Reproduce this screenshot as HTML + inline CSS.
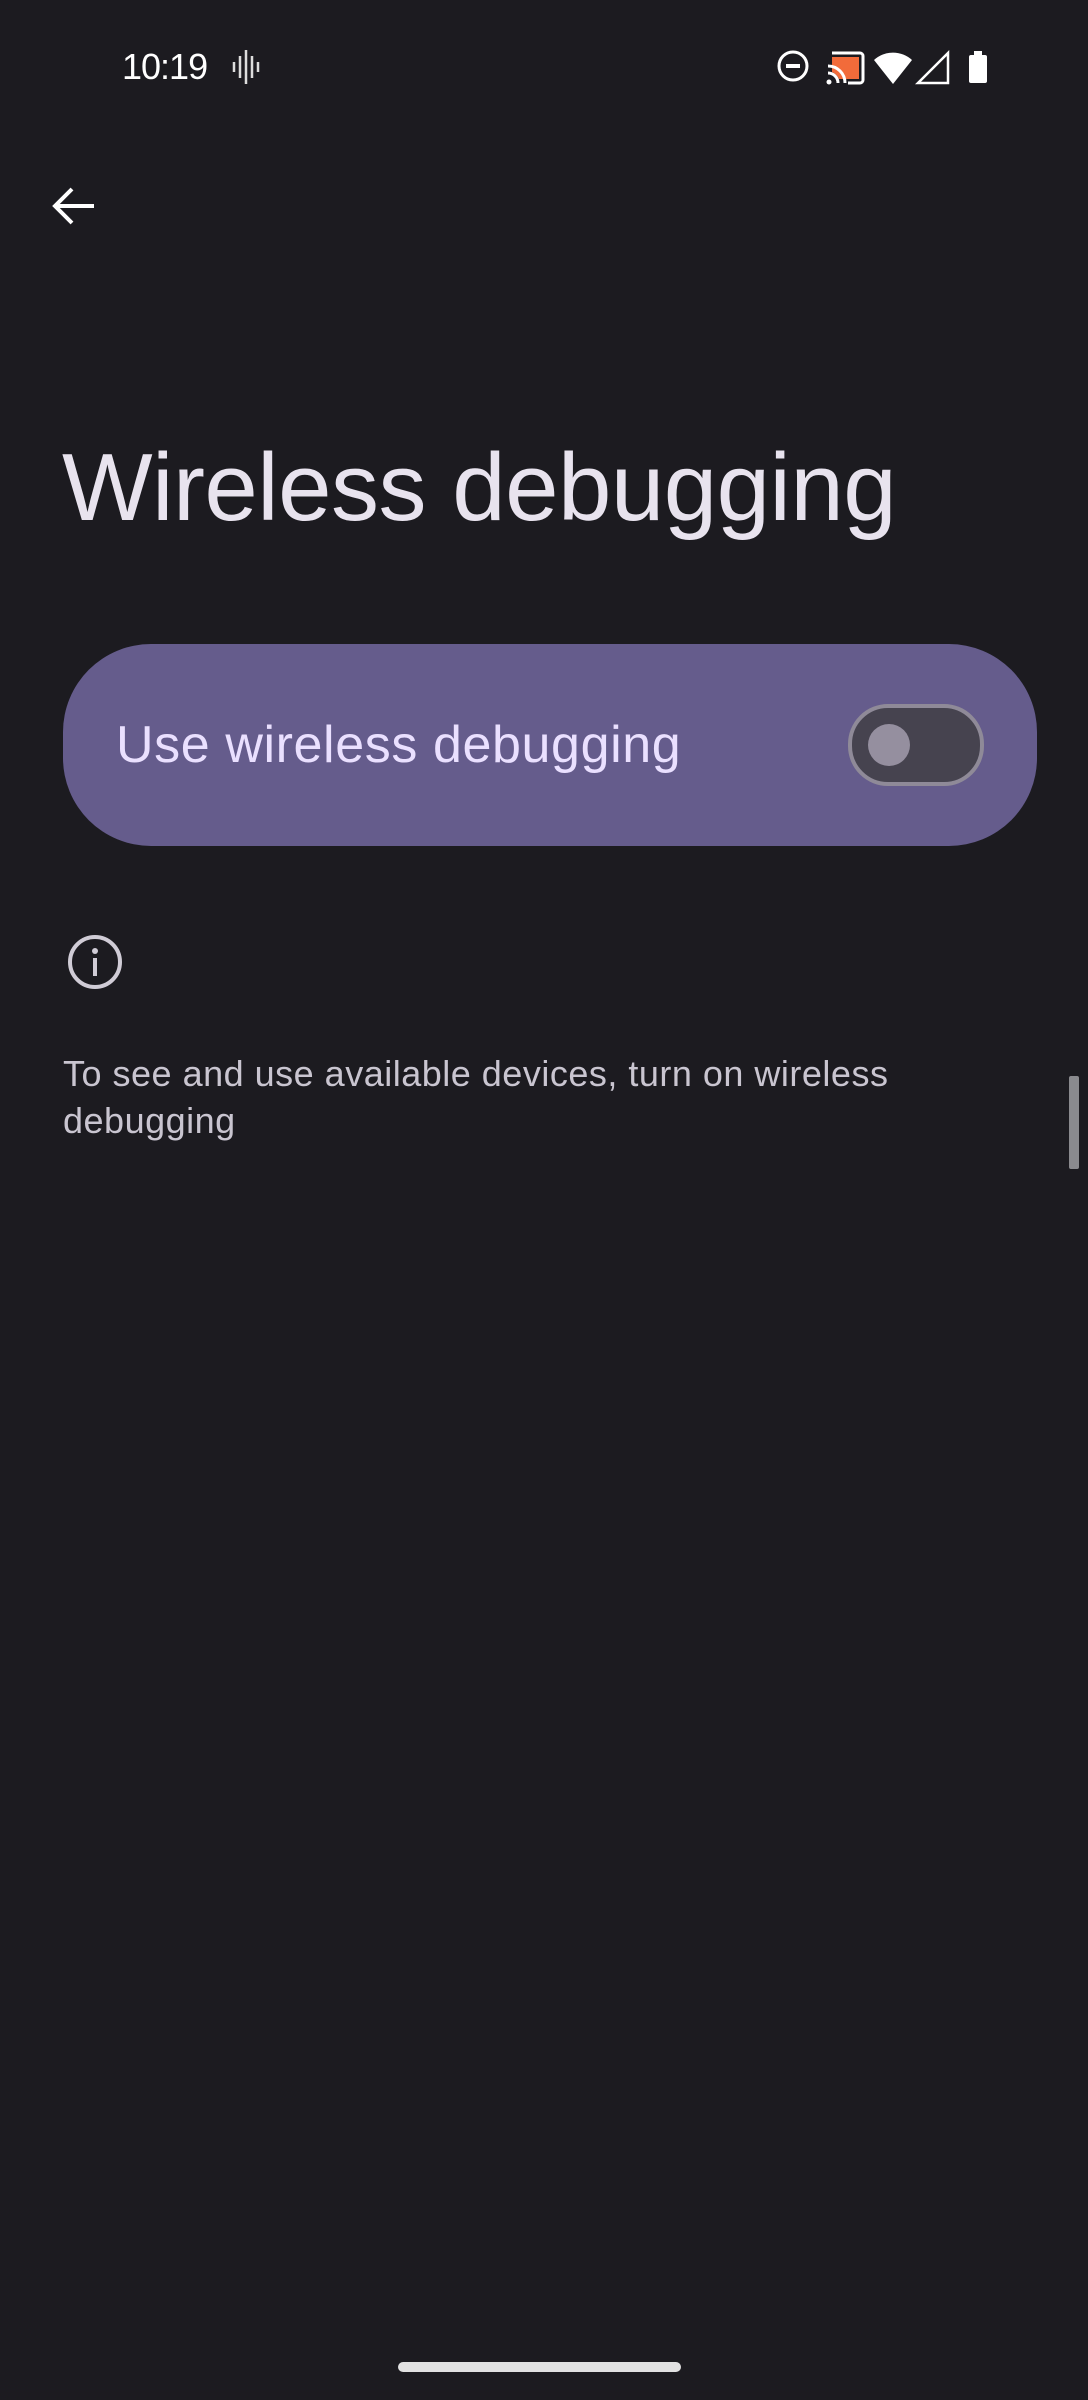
<!DOCTYPE html>
<html><head><meta charset="utf-8"><style>
html,body{margin:0;padding:0;background:#1c1b20;}
body{width:1088px;height:2400px;position:relative;overflow:hidden;font-family:"Liberation Sans",sans-serif;}
.abs{position:absolute;}
</style></head><body>
<div class="abs" style="left:122px;top:44px;font-size:36px;color:#fff;line-height:46px;letter-spacing:-1px;">10:19</div>
<svg class="abs" style="left:230px;top:50px" width="32" height="34" viewBox="0 0 32 34"><g stroke="#ddd" stroke-width="2.5"><line x1="4" y1="12" x2="4" y2="22"/><line x1="10" y1="6" x2="10" y2="28"/><line x1="16" y1="0" x2="16" y2="34"/><line x1="22" y1="6" x2="22" y2="28"/><line x1="28" y1="12" x2="28" y2="22"/></g></svg>
<svg class="abs" style="left:760px;top:40px" width="250" height="55" viewBox="760 40 250 55">
<circle cx="793" cy="66" r="14" fill="none" stroke="#fff" stroke-width="3"/><rect x="786" y="64" width="14" height="4" fill="#fff"/>
<path d="M832 53h28a3 3 0 0 1 3 3v24a3 3 0 0 1-3 3h-12" fill="none" stroke="#fff" stroke-width="3"/>
<path d="M832 57h27v22h-20a14 14 0 0 0-7-7z" fill="#f26b3a"/>
<path d="M828 66a17 17 0 0 1 17 17M828 73a10 10 0 0 1 10 10" fill="none" stroke="#fff" stroke-width="3"/><circle cx="829" cy="82" r="2.5" fill="#fff"/>
<path d="M874 60a28 28 0 0 1 38 0l-19 24z" fill="#fff"/>
<path d="M918 83l30-30v30z" fill="none" stroke="#fff" stroke-width="2.5"/>
<rect x="969" y="55" width="18" height="28" rx="2" fill="#fff"/><rect x="974" y="51" width="8" height="5" fill="#fff"/>
</svg>
<svg class="abs" style="left:50px;top:185px" width="48" height="42" viewBox="0 0 48 42"><path d="M44 21H6M22 4L5 21l17 17" fill="none" stroke="#fff" stroke-width="4"/></svg>
<div class="abs" style="left:62px;top:428px;font-size:96px;color:#e8e3ee;line-height:120px;letter-spacing:-0.5px;">Wireless debugging</div>
<div class="abs" style="left:63px;top:644px;width:974px;height:202px;border-radius:88px;background:#655c8c;"></div>
<div class="abs" style="left:116px;top:714px;font-size:52px;color:#eae0ff;line-height:62px;letter-spacing:0.6px;">Use wireless debugging</div>
<div class="abs" style="left:848px;top:704px;width:128px;height:74px;border-radius:40px;background:#46434f;border:4px solid #8f8a98;"></div>
<div class="abs" style="left:868px;top:724px;width:42px;height:42px;border-radius:50%;background:#958f9f;"></div>
<svg class="abs" style="left:66px;top:933px" width="58" height="58" viewBox="0 0 58 58"><circle cx="29" cy="29" r="25" fill="none" stroke="#d0ccd6" stroke-width="4"/><rect x="27" y="25" width="4" height="18" fill="#d0ccd6"/><circle cx="29" cy="18" r="3" fill="#d0ccd6"/></svg>
<div class="abs" style="left:63px;top:1050px;width:960px;font-size:36px;color:#c9c5d0;line-height:47px;letter-spacing:0.5px;">To see and use available devices, turn on wireless debugging</div>
<div class="abs" style="left:1069px;top:1076px;width:10px;height:93px;background:#8a8a8e;border-radius:2px;"></div>
<div class="abs" style="left:398px;top:2362px;width:283px;height:10px;border-radius:5px;background:#e2e2e2;"></div>
</body></html>
